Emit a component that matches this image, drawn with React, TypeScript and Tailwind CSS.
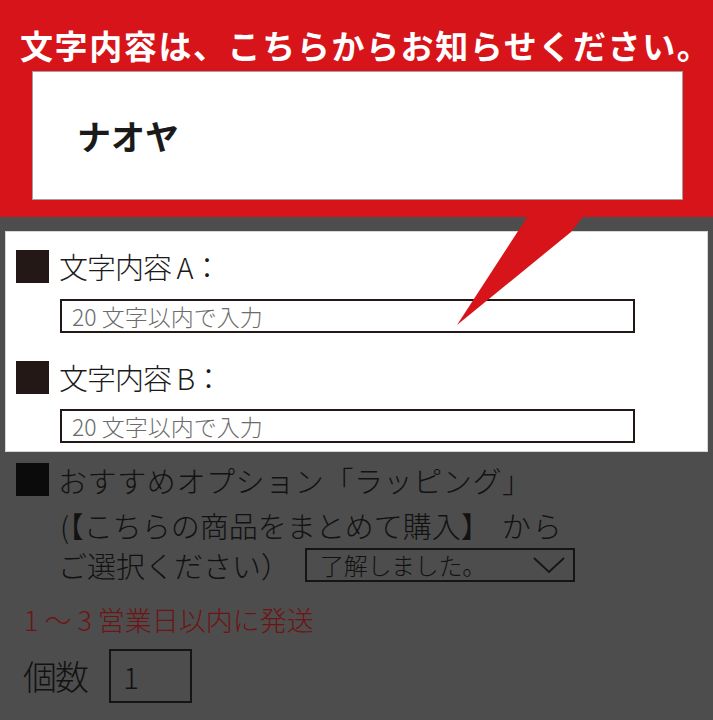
const FONT = '"Noto Sans CJK JP", "Noto Sans", sans-serif';

function Square({ dark }: { dark?: boolean }) {
  return <span className={`block h-[33px] w-[33px] shrink-0 ${dark ? "bg-[#0b0b0b]" : "bg-[#231815]"}`} />;
}

function TextField() {
  return (
    <input
      type="text"
      placeholder="20 文字以内で入力"
      className="ml-[54px] block h-[34px] w-[575px] border-2 border-[#231815] bg-white px-[10px] text-[23px] font-light leading-none text-[#222] outline-none placeholder:text-[#6b6b6b]"
      style={{ fontFamily: FONT }}
    />
  );
}

export default function App() {
  return (
    <div className="relative h-[720px] w-[713px] overflow-hidden bg-[#4d4d4d]" style={{ fontFamily: FONT }}>
      {/* red callout */}
      <div className="h-[217px] bg-[#d7141a] pt-[28px]">
        <h1 className="pl-[20px] text-[33px] font-bold leading-[34px] tracking-[1.6px] text-white">
          文字内容は、こちらからお知らせください。
        </h1>
        <div className="ml-[32px] mt-[9px] flex h-[129px] w-[651px] items-center border border-[#a0a0a0] bg-white pl-[44px]">
          <span className="text-[34px] font-bold leading-none text-[#1a1a1a]">ナオヤ</span>
        </div>
      </div>

      {/* highlighted panel */}
      <div className="mx-[5px] mt-[14px] h-[221px] border border-[#d6d6d6] bg-white pt-[18px]">
        <div className="flex items-center gap-[10px] pl-[10px]">
          <Square />
          <span className="text-[29px] font-light leading-none tracking-[-1px] text-[#1a1a1a]">文字内容 A：</span>
        </div>
        <div className="mt-[16px]">
          <TextField />
        </div>
        <div className="mt-[28px] flex items-center gap-[10px] pl-[10px]">
          <Square />
          <span className="text-[29px] font-light leading-none tracking-[-1px] text-[#1a1a1a]">文字内容 B：</span>
        </div>
        <div className="mt-[15px]">
          <TextField />
        </div>
      </div>

      {/* dimmed lower part */}
      <div className="flex gap-[9px] pl-[16px] pt-[6px] text-[29px] font-light text-[#121212]">
        <div className="pt-[5px]">
          <Square dark />
        </div>
        <div>
          <p className="h-[45px] leading-[45px] tracking-[0.6px]">おすすめオプション「ラッピング」</p>
          <p className="h-[45px] pl-[2px] leading-[45px]">
            (【こちらの商品をまとめて購入】<span className="ml-[12px] tracking-[2px]">から</span>
          </p>
          <div className="flex h-[34px] items-center">
            <span className="leading-none">ご選択ください）</span>
            <div className="ml-[15px] flex h-[34px] w-[270px] items-center justify-between border-2 border-[#151515] pl-[13px] pr-[8px]">
              <span className="text-[24px] leading-none tracking-[-0.3px]">了解しました。</span>
              <svg width="32" height="18" viewBox="0 0 32 18" fill="none" stroke="#151515" strokeWidth="1.8">
                <polyline points="1,2 16,16 31,2" />
              </svg>
            </div>
          </div>
        </div>
      </div>

      <p className="mt-[22px] pl-[24px] text-[27px] font-light leading-[32px] text-[#6e1414]">
        1 ～ 3 営業日以内に発送
      </p>

      <div className="mt-[13px] flex items-center gap-[22px] pl-[23px] font-light text-[#121212]">
        <span className="text-[34px] leading-none tracking-[-2px]">個数</span>
        <div className="flex h-[54px] w-[83px] items-center border-2 border-[#151515] pl-[12px] text-[30px] leading-none">
          1
        </div>
      </div>

      {/* callout pointer */}
      <svg className="pointer-events-none absolute left-0 top-0" width="713" height="720" viewBox="0 0 713 720">
        <polygon points="535,205 592,205 571,232 457,325" fill="#d7141a" />
      </svg>
    </div>
  );
}
